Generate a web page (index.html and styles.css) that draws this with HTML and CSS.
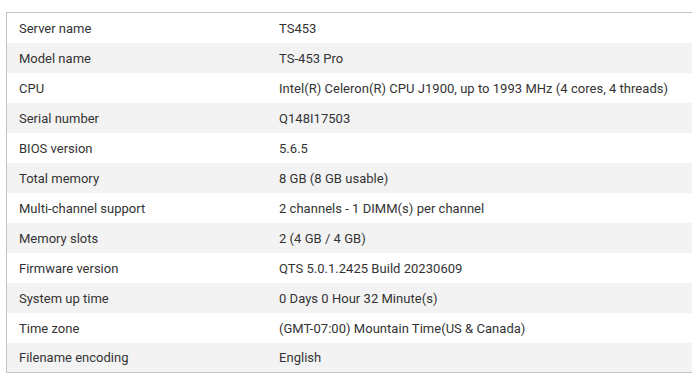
FILE: index.html
```html
<!DOCTYPE html>
<html>
<head>
<meta charset="utf-8">
<link rel="stylesheet" href="styles.css">
</head>
<body>
<div class="panel">
  <div class="row"><div class="label">Server name</div><div class="value">TS453</div></div>
  <div class="row"><div class="label">Model name</div><div class="value">TS-453 Pro</div></div>
  <div class="row"><div class="label">CPU</div><div class="value">Intel(R) Celeron(R) CPU J1900, up to 1993 MHz (4 cores, 4 threads)</div></div>
  <div class="row"><div class="label">Serial number</div><div class="value">Q148I17503</div></div>
  <div class="row"><div class="label">BIOS version</div><div class="value">5.6.5</div></div>
  <div class="row"><div class="label">Total memory</div><div class="value">8 GB (8 GB usable)</div></div>
  <div class="row"><div class="label">Multi-channel support</div><div class="value">2 channels - 1 DIMM(s) per channel</div></div>
  <div class="row"><div class="label">Memory slots</div><div class="value">2 (4 GB / 4 GB)</div></div>
  <div class="row"><div class="label">Firmware version</div><div class="value">QTS 5.0.1.2425 Build 20230609</div></div>
  <div class="row"><div class="label">System up time</div><div class="value">0 Days 0 Hour 32 Minute(s)</div></div>
  <div class="row"><div class="label">Time zone</div><div class="value">(GMT-07:00) Mountain Time(US &amp; Canada)</div></div>
  <div class="row last"><div class="label">Filename encoding</div><div class="value">English</div></div>
</div>
</body>
</html>
```
FILE: styles.css
```css
html, body {
  margin: 0;
  padding: 0;
  background: #ffffff;
  overflow: hidden;
}
body {
  padding: 12px 0 0 6px;
  font-family: Roboto, "Liberation Sans", sans-serif;
  font-size: 13px;
  color: #333333;
}
.panel {
  border: 1px solid #c4c4c4;
  border-right: none;
}
.row {
  display: flex;
  align-items: center;
  height: 30px;
}
.row.last {
  height: 29px;
}
.row:nth-child(even) {
  background: #f3f3f3;
}
.label {
  width: 260px;
  padding-left: 12px;
  flex: none;
}
.value {
  white-space: nowrap;
  letter-spacing: 0.03px;
}
```
